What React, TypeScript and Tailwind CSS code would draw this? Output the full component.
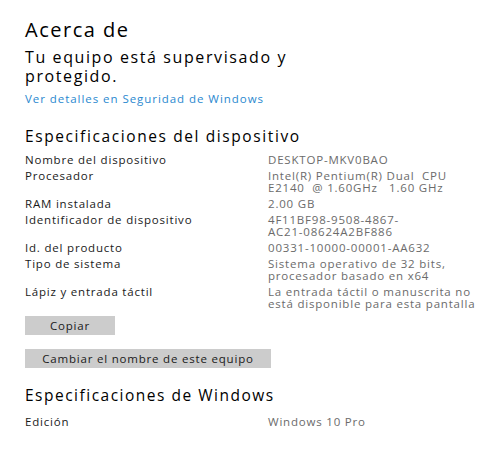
const SPECS: { label: string; value: string[] }[] = [
  { label: 'Nombre del dispositivo', value: ['DESKTOP-MKV0BAO'] },
  { label: 'Procesador', value: ['Intel(R) Pentium(R) Dual  CPU', 'E2140  @ 1.60GHz   1.60 GHz'] },
  { label: 'RAM instalada', value: ['2.00 GB'] },
  { label: 'Identificador de dispositivo', value: ['4F11BF98-9508-4867-', 'AC21-08624A2BF886'] },
  { label: 'Id. del producto', value: ['00331-10000-00001-AA632'] },
  { label: 'Tipo de sistema', value: ['Sistema operativo de 32 bits,', 'procesador basado en x64'] },
  { label: 'Lápiz y entrada táctil', value: ['La entrada táctil o manuscrita no', 'está disponible para esta pantalla'] },
]

function SpecRow({ label, value }: { label: string; value: string[] }) {
  return (
    <div className="flex">
      <div className="w-[243px] shrink-0 text-[#1a1a1a]">{label}</div>
      <div className="text-[#6b6b6b] whitespace-pre">
        {value.map((v) => (
          <div key={v}>{v}</div>
        ))}
      </div>
    </div>
  )
}

export default function App() {
  return (
    <div
      className="w-[500px] h-[449px] bg-white overflow-hidden pl-[25px] pt-[18px] text-black"
      style={{ fontFamily: '"Open Sans", "Noto Sans", sans-serif' }}
    >
      <h1 className="text-[20px] leading-[24px] font-normal tracking-[1.5px]">Acerca de</h1>
      <p className="mt-[6px] text-[16px] leading-[19px] tracking-[1.6px]">
        Tu equipo está supervisado y
        <br />
        protegido.
      </p>
      <a className="block mt-[6px] text-[11.5px] leading-[14px] tracking-[0.95px] text-[#2a89cf]">
        Ver detalles en Seguridad de Windows
      </a>

      <h2 className="mt-[20px] text-[15.5px] leading-[20px] font-normal tracking-[1.6px]">
        Especificaciones del dispositivo
      </h2>
      <div className="mt-[8px] flex flex-col gap-y-[4px] text-[11.5px] leading-[12px] tracking-[0.8px]">
        {SPECS.map((s) => (
          <SpecRow key={s.label} label={s.label} value={s.value} />
        ))}
      </div>

      <button className="mt-[6px] block w-[90px] h-[19px] bg-[#cccccc] text-[11.5px] leading-[19px] tracking-[0.8px] text-[#1a1a1a]">
        Copiar
      </button>
      <button className="mt-[14px] block w-[246px] h-[19px] bg-[#cccccc] text-[11.5px] leading-[19px] tracking-[0.8px] text-[#1a1a1a]">
        Cambiar el nombre de este equipo
      </button>

      <h2 className="mt-[17px] text-[15.5px] leading-[20px] font-normal tracking-[1.5px]">
        Especificaciones de Windows
      </h2>
      <div className="mt-[11px] text-[11.5px] leading-[12px] tracking-[0.8px]">
        <SpecRow label="Edición" value={['Windows 10 Pro']} />
      </div>
    </div>
  )
}
